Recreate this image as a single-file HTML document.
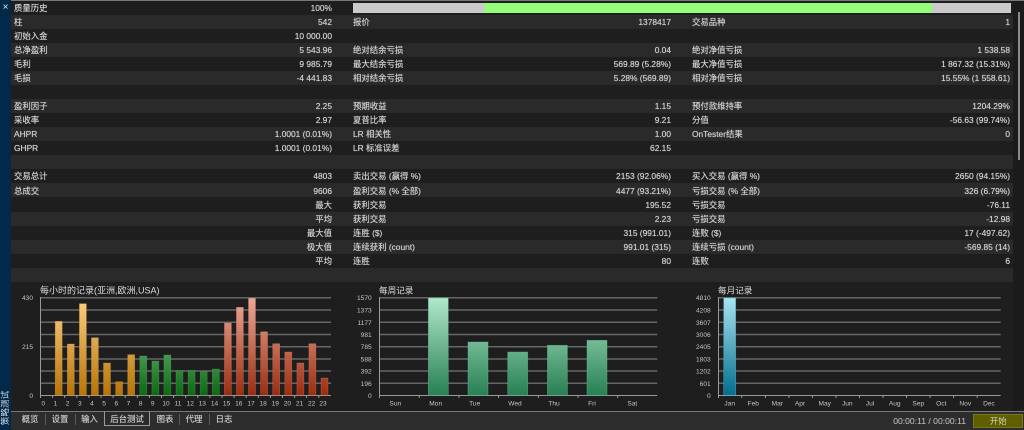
<!DOCTYPE html>
<html lang="zh"><head><meta charset="utf-8"><title>策略测试</title>
<style>
html,body{margin:0;padding:0;background:#1e1e1e}
#p{position:relative;width:1024px;height:430px;overflow:hidden;background:#1e1e1e;font-family:"Liberation Sans","Noto Sans CJK SC",sans-serif;font-size:8.4px;color:#d2d2d2}
#t{position:absolute;left:11px;top:.6px;width:1002px;filter:blur(.3px)}
.r{position:relative;height:14.07px;line-height:14px;background:#1e1e1e;white-space:nowrap;text-shadow:0 0 .6px #bbb}
.r:nth-child(even){background:#2a2a2a}
.r span{position:absolute;top:.1px}
.a{left:3px}.b{right:681px}.c{left:342px}.d{right:342px}.e{left:681px}.f{right:3px}
#top{position:absolute;left:11px;top:0;width:1013px;height:1.2px;background:#777}
#side{position:absolute;left:0;top:0;width:11px;height:430px;background:#03294a}
#x{position:absolute;left:0;top:1px;width:11px;text-align:center;font-size:10px;line-height:13px;color:#e0e7ee}
#v{position:absolute;left:-13px;top:402px;width:36px;height:12px;line-height:12px;text-align:center;transform:rotate(-90deg);font-size:8.6px;color:#d0d8e0;white-space:nowrap}
#rb{position:absolute;left:1013px;top:1px;width:11px;height:410px;background:#1b1b1b}
#sc{position:absolute;left:1018px;top:12px;width:1.6px;height:148px;background:#8a8a8a}
#pb{position:absolute;left:352.7px;top:2.7px;width:658px;height:10px;background:#cbcbcb}
#pg{position:absolute;left:131.3px;top:0;width:447.7px;height:10px;background:#96fc7c}
svg{position:absolute;left:0;top:0;filter:blur(.35px)}
#bot{position:absolute;left:11px;top:411px;width:1013px;height:19px;background:#2d2d2d;border-top:1.3px solid #777;box-sizing:border-box}
.tb{position:absolute;top:412.5px;height:14px;line-height:13px;font-size:8.4px;color:#cfcfcf;text-align:center;filter:blur(.25px);text-shadow:0 0 .5px #aaa}
.sp{position:absolute;top:414px;width:1px;height:11px;background:#5c5c5c}
#act{position:absolute;left:104px;top:411px;width:46px;height:15.4px;box-sizing:border-box;border:1.2px solid #9a9a9a;border-top:1.3px solid #777;background:#2a2a2a}
#tm{position:absolute;left:880px;width:86px;top:414px;line-height:14px;text-align:right;font-size:8.6px;color:#c8c8c8;filter:blur(.2px)}
#go{position:absolute;left:973.3px;top:413.7px;width:50px;height:14px;box-sizing:border-box;background:#5f5f00;border:1px solid #77771a;line-height:12px;text-align:center;font-size:8.4px;color:#d6d6bc}
</style></head><body><div id="p">
<div id="t">
<div class="r"><span class="a">质量历史</span><span class="b">100%</span></div>
<div class="r"><span class="a">柱</span><span class="b">542</span><span class="c">报价</span><span class="d">1378417</span><span class="e">交易品种</span><span class="f">1</span></div>
<div class="r"><span class="a">初始入金</span><span class="b">10 000.00</span></div>
<div class="r"><span class="a">总净盈利</span><span class="b">5 543.96</span><span class="c">绝对结余亏损</span><span class="d">0.04</span><span class="e">绝对净值亏损</span><span class="f">1 538.58</span></div>
<div class="r"><span class="a">毛利</span><span class="b">9 985.79</span><span class="c">最大结余亏损</span><span class="d">569.89 (5.28%)</span><span class="e">最大净值亏损</span><span class="f">1 867.32 (15.31%)</span></div>
<div class="r"><span class="a">毛损</span><span class="b">-4 441.83</span><span class="c">相对结余亏损</span><span class="d">5.28% (569.89)</span><span class="e">相对净值亏损</span><span class="f">15.55% (1 558.61)</span></div>
<div class="r"></div>
<div class="r"><span class="a">盈利因子</span><span class="b">2.25</span><span class="c">预期收益</span><span class="d">1.15</span><span class="e">预付款维持率</span><span class="f">1204.29%</span></div>
<div class="r"><span class="a">采收率</span><span class="b">2.97</span><span class="c">夏普比率</span><span class="d">9.21</span><span class="e">分值</span><span class="f">-56.63 (99.74%)</span></div>
<div class="r"><span class="a">AHPR</span><span class="b">1.0001 (0.01%)</span><span class="c">LR 相关性</span><span class="d">1.00</span><span class="e">OnTester结果</span><span class="f">0</span></div>
<div class="r"><span class="a">GHPR</span><span class="b">1.0001 (0.01%)</span><span class="c">LR 标准误差</span><span class="d">62.15</span></div>
<div class="r"></div>
<div class="r"><span class="a">交易总计</span><span class="b">4803</span><span class="c">卖出交易 (赢得 %)</span><span class="d">2153 (92.06%)</span><span class="e">买入交易 (赢得 %)</span><span class="f">2650 (94.15%)</span></div>
<div class="r"><span class="a">总成交</span><span class="b">9606</span><span class="c">盈利交易 (% 全部)</span><span class="d">4477 (93.21%)</span><span class="e">亏损交易 (% 全部)</span><span class="f">326 (6.79%)</span></div>
<div class="r"><span class="b">最大</span><span class="c">获利交易</span><span class="d">195.52</span><span class="e">亏损交易</span><span class="f">-76.11</span></div>
<div class="r"><span class="b">平均</span><span class="c">获利交易</span><span class="d">2.23</span><span class="e">亏损交易</span><span class="f">-12.98</span></div>
<div class="r"><span class="b">最大值</span><span class="c">连胜 ($)</span><span class="d">315 (991.01)</span><span class="e">连败 ($)</span><span class="f">17 (-497.62)</span></div>
<div class="r"><span class="b">极大值</span><span class="c">连续获利 (count)</span><span class="d">991.01 (315)</span><span class="e">连续亏损 (count)</span><span class="f">-569.85 (14)</span></div>
<div class="r"><span class="b">平均</span><span class="c">连胜</span><span class="d">80</span><span class="e">连败</span><span class="f">6</span></div>
<div class="r"></div>
</div>
<div id="top"></div>
<div id="pb"><div id="pg"></div></div>
<div id="rb"></div><div id="sc"></div>
<svg width="1024" height="430" viewBox="0 0 1024 430" xmlns="http://www.w3.org/2000/svg" font-family="Liberation Sans, Noto Sans CJK SC, sans-serif">
<defs>
<linearGradient id="o" gradientUnits="userSpaceOnUse" x1="0" y1="298" x2="0" y2="395"><stop offset="0" stop-color="#fdd084"/><stop offset="1" stop-color="#b87406"/></linearGradient>
<linearGradient id="g" gradientUnits="userSpaceOnUse" x1="0" y1="298" x2="0" y2="395"><stop offset="0" stop-color="#96d6a2"/><stop offset="1" stop-color="#0b6b12"/></linearGradient>
<linearGradient id="h" gradientUnits="userSpaceOnUse" x1="0" y1="298" x2="0" y2="395"><stop offset="0" stop-color="#eca996"/><stop offset="1" stop-color="#9e2c0e"/></linearGradient>
<linearGradient id="w" gradientUnits="userSpaceOnUse" x1="0" y1="298" x2="0" y2="395"><stop offset="0" stop-color="#b0e8cb"/><stop offset="1" stop-color="#288053"/></linearGradient>
<linearGradient id="m" gradientUnits="userSpaceOnUse" x1="0" y1="298" x2="0" y2="395"><stop offset="0" stop-color="#a8e4f0"/><stop offset="1" stop-color="#026e8e"/></linearGradient>
</defs>
<g stroke="#666" stroke-width="1.5">
<path d="M40.5 297.7H331M40.5 310H331M40.5 322.3H331M40.5 334.5H331M40.5 346.7H331M40.5 359H331M40.5 371H331M40.5 383.3H331"/>
<path d="M379.3 297.7H657.3M379.3 310H657.3M379.3 322.3H657.3M379.3 334.5H657.3M379.3 346.7H657.3M379.3 359H657.3M379.3 371H657.3M379.3 383.3H657.3"/>
<path d="M718.3 297.7H1000.7M718.3 310H1000.7M718.3 322.3H1000.7M718.3 334.5H1000.7M718.3 346.7H1000.7M718.3 359H1000.7M718.3 371H1000.7M718.3 383.3H1000.7"/>
</g>
<g stroke="#9a9a9a" stroke-width="1" fill="none">
<path d="M40.5 297V398M40 395.5H331M52.6 395.5V398M64.7 395.5V398M76.8 395.5V398M88.9 395.5V398M101 395.5V398M113.1 395.5V398M125.2 395.5V398M137.3 395.5V398M149.4 395.5V398M161.5 395.5V398M173.6 395.5V398M185.7 395.5V398M197.8 395.5V398M209.9 395.5V398M222 395.5V398M234.1 395.5V398M246.2 395.5V398M258.3 395.5V398M270.4 395.5V398M282.5 395.5V398M294.6 395.5V398M306.7 395.5V398M318.8 395.5V398"/>
<path d="M379.5 297V398M379 395.5H657.3M419.2 395.5V398M458.9 395.5V398M498.6 395.5V398M538.3 395.5V398M578 395.5V398M617.7 395.5V398"/>
<path d="M718.5 297V398M718 395.5H1000.7M741.8 395.5V398M765.4 395.5V398M788.9 395.5V398M812.4 395.5V398M836 395.5V398M859.5 395.5V398M883 395.5V398M906.6 395.5V398M930.1 395.5V398M953.6 395.5V398M977.2 395.5V398"/>
</g>
<g fill="url(#o)" stroke="#d9a050" stroke-opacity=".45" stroke-width=".6">
<rect x="55.2" y="321.3" width="7" height="74"/><rect x="67.3" y="344" width="7" height="51.3"/><rect x="79.4" y="303.7" width="7" height="91.6"/><rect x="91.4" y="337.7" width="7" height="57.6"/><rect x="103.5" y="363" width="7" height="32.3"/><rect x="115.6" y="381.7" width="7" height="13.6"/><rect x="127.7" y="354.7" width="7" height="40.6"/>
</g>
<g fill="url(#g)" stroke="#5aa868" stroke-opacity=".45" stroke-width=".6">
<rect x="139.8" y="356" width="7" height="39.3"/><rect x="151.9" y="361" width="7" height="34.3"/><rect x="163.9" y="355" width="7" height="40.3"/><rect x="176" y="370.3" width="7" height="25"/><rect x="188.1" y="370.3" width="7" height="25"/><rect x="200.2" y="371.7" width="7" height="23.6"/><rect x="212.3" y="369" width="7" height="26.3"/>
</g>
<g fill="url(#h)" stroke="#d88a75" stroke-opacity=".45" stroke-width=".6">
<rect x="224.4" y="323" width="7" height="72.3"/><rect x="236.4" y="307.3" width="7" height="88"/><rect x="248.5" y="298.3" width="7" height="97"/><rect x="260.6" y="331.7" width="7" height="63.6"/><rect x="272.7" y="343.7" width="7" height="51.6"/><rect x="284.8" y="352" width="7" height="43.3"/><rect x="296.9" y="363" width="7" height="32.3"/><rect x="308.9" y="343.7" width="7" height="51.6"/><rect x="321" y="378" width="7" height="17.3"/>
</g>
<g fill="url(#w)" stroke="#5cbb8c" stroke-opacity=".6" stroke-width=".7">
<rect x="428.3" y="298" width="20" height="97.3"/><rect x="468" y="342" width="20" height="53.3"/><rect x="507.7" y="352" width="20" height="43.3"/><rect x="547.4" y="345.3" width="20" height="50"/><rect x="587" y="340.3" width="20" height="55"/>
</g>
<rect x="723.7" y="298" width="12" height="97.3" fill="url(#m)" stroke="#58b6cf" stroke-opacity=".6" stroke-width=".7"/>
<g fill="#dcdcdc" font-size="9">
<text x="40" y="293.5">每小时的记录(亚洲,欧洲,USA)</text>
<text x="379" y="293.5" font-size="8.6">每周记录</text>
<text x="718" y="293.5" font-size="8.6">每月记录</text>
</g>
<g fill="#c4c4c4" font-size="6.6" text-anchor="end">
<text x="33" y="300.2">430</text><text x="33" y="349.2">215</text><text x="33" y="398">0</text>
<text x="371.7" y="300.2">1570</text><text x="371.7" y="312.5">1373</text><text x="371.7" y="324.8">1177</text><text x="371.7" y="337">981</text><text x="371.7" y="349.2">785</text><text x="371.7" y="361.5">588</text><text x="371.7" y="373.5">392</text><text x="371.7" y="385.8">196</text><text x="371.7" y="398">0</text>
<text x="710.7" y="300.2">4810</text><text x="710.7" y="312.5">4208</text><text x="710.7" y="324.8">3607</text><text x="710.7" y="337">3006</text><text x="710.7" y="349.2">2405</text><text x="710.7" y="361.5">1803</text><text x="710.7" y="373.5">1202</text><text x="710.7" y="385.8">601</text><text x="710.7" y="398">0</text>
</g>
<g fill="#c4c4c4" font-size="6.6" text-anchor="middle">
<text x="43.3" y="405.3">0</text><text x="55.5" y="405.3">1</text><text x="67.6" y="405.3">2</text><text x="79.8" y="405.3">3</text><text x="91.9" y="405.3">4</text><text x="104.1" y="405.3">5</text><text x="116.3" y="405.3">6</text><text x="128.4" y="405.3">7</text><text x="140.6" y="405.3">8</text><text x="152.7" y="405.3">9</text><text x="166" y="405.3">10</text><text x="178" y="405.3">11</text><text x="190.3" y="405.3">12</text><text x="202.3" y="405.3">13</text><text x="214.5" y="405.3">14</text><text x="226.6" y="405.3">15</text><text x="238.8" y="405.3">16</text><text x="251" y="405.3">17</text><text x="263.1" y="405.3">18</text><text x="275.3" y="405.3">19</text><text x="287.4" y="405.3">20</text><text x="299.6" y="405.3">21</text><text x="311.7" y="405.3">22</text><text x="323" y="405.3">23</text>
<text x="395.3" y="405.3">Sun</text><text x="435.7" y="405.3">Mon</text><text x="474.7" y="405.3">Tue</text><text x="515" y="405.3">Wed</text><text x="554" y="405.3">Thu</text><text x="592" y="405.3">Fri</text><text x="632.3" y="405.3">Sat</text>
<text x="729.7" y="405.3">Jan</text><text x="753.3" y="405.3">Feb</text><text x="777.3" y="405.3">Mar</text><text x="800" y="405.3">Apr</text><text x="824.7" y="405.3">May</text><text x="847.3" y="405.3">Jun</text><text x="870" y="405.3">Jul</text><text x="894.7" y="405.3">Aug</text><text x="918.3" y="405.3">Sep</text><text x="941.3" y="405.3">Oct</text><text x="965.3" y="405.3">Nov</text><text x="989" y="405.3">Dec</text>
</g>
</svg>
<div id="bot"></div>
<div id="act"></div>
<div class="tb" style="left:18px;width:24px">概览</div>
<div class="sp" style="left:45px"></div>
<div class="tb" style="left:48px;width:24px">设置</div>
<div class="sp" style="left:75px"></div>
<div class="tb" style="left:77.5px;width:24px">输入</div>
<div class="tb" style="left:105px;width:44px">后台测试</div>
<div class="tb" style="left:153px;width:24px">图表</div>
<div class="sp" style="left:179px"></div>
<div class="tb" style="left:182px;width:24px">代理</div>
<div class="sp" style="left:209px"></div>
<div class="tb" style="left:212px;width:24px">日志</div>
<div id="tm">00:00:11 / 00:00:11</div>
<div id="go">开始</div>
<div id="side"><div id="x">×</div><div id="v">策略测试</div></div>
</div></body></html>
